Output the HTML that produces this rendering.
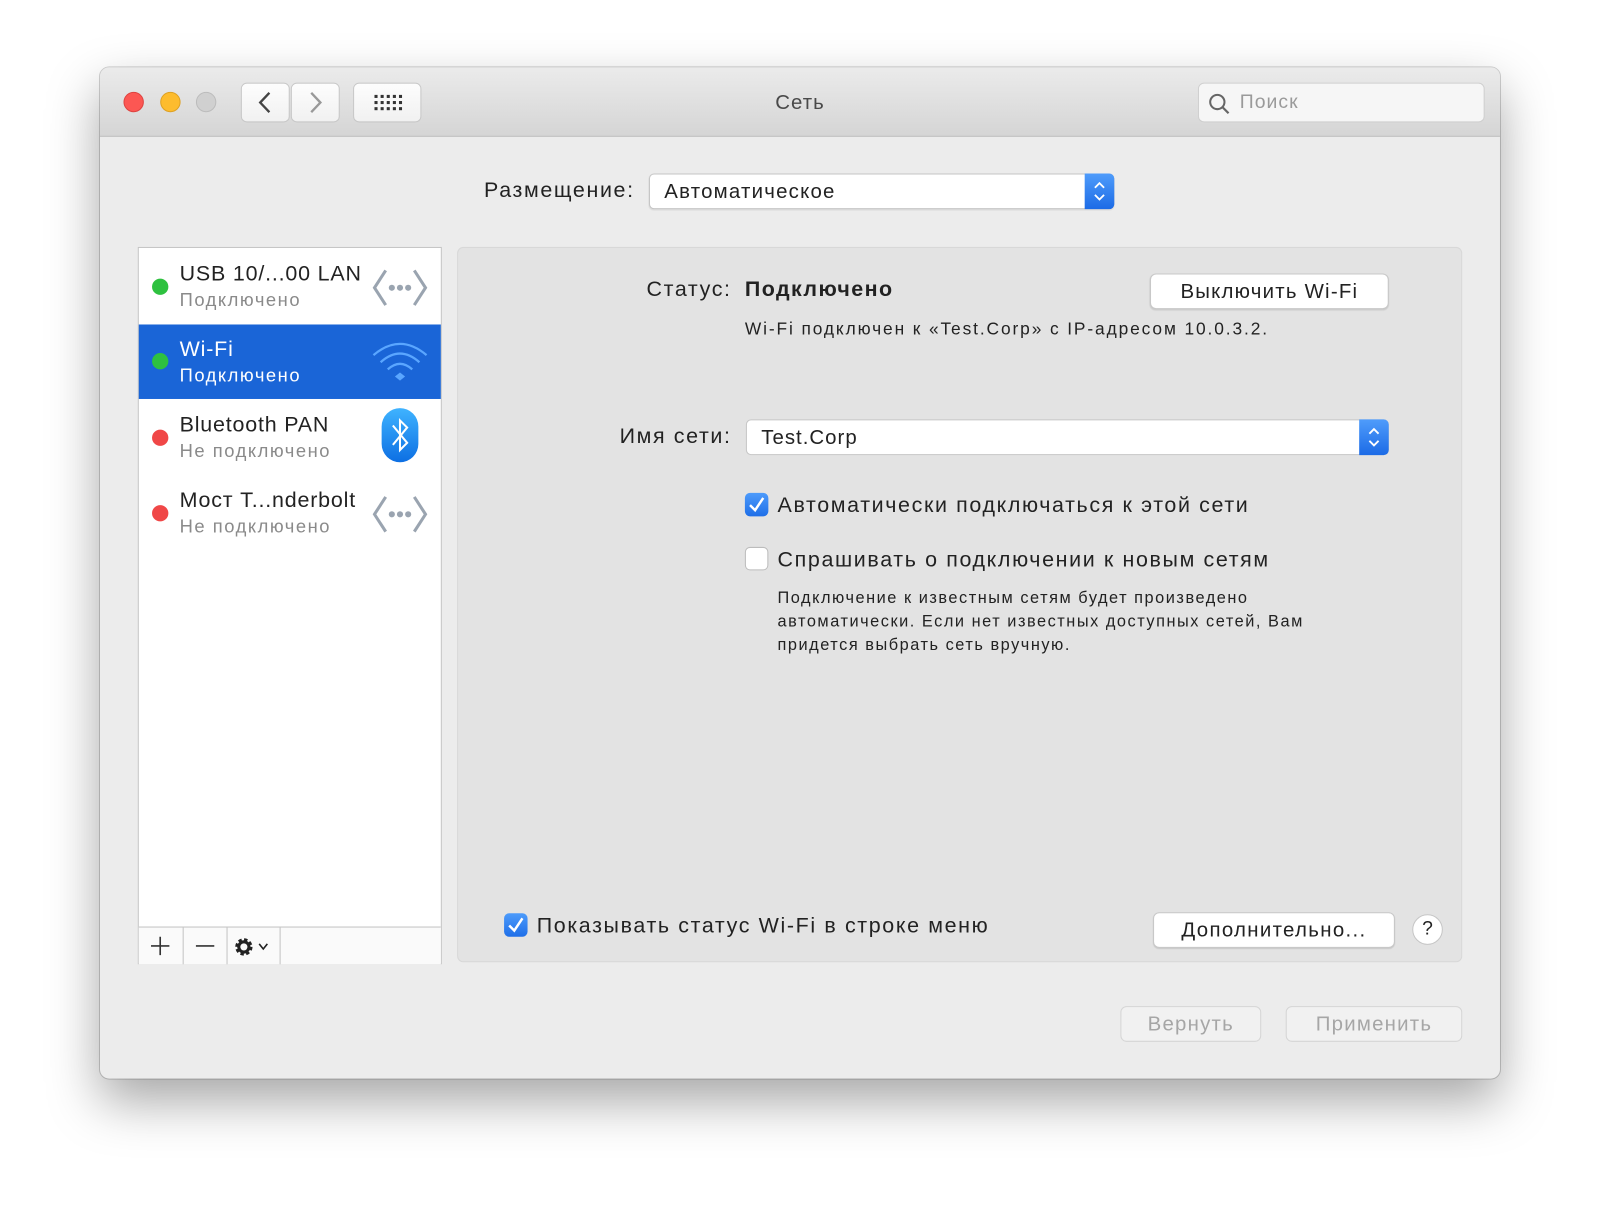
<!DOCTYPE html>
<html><head><meta charset="utf-8"><style>
html,body{margin:0;padding:0;background:#fff;width:1600px;height:1211px;overflow:hidden;font-family:"Liberation Sans","Noto Sans CJK SC",sans-serif;color:#222}
#s{position:absolute;left:0;top:0;width:1568px;height:1187px;transform:scale(1.0204);transform-origin:0 0}
.a{position:absolute}
.win{left:98px;top:66px;width:1372px;height:991px;border-radius:9px;background:#ececec;box-shadow:0 22px 50px rgba(0,0,0,.35),0 0 0 1px rgba(0,0,0,.18);overflow:hidden}
.tb{left:0;top:0;width:1372px;height:67px;background:linear-gradient(#ebebeb,#d5d5d5);border-bottom:1px solid #b9b9b9}
.dot{width:20px;height:20px;border-radius:50%;top:24px}
.btn{background:linear-gradient(#fdfdfd,#f1f1f1);border:1px solid #c8c8c8;border-radius:6px;box-sizing:border-box}
.t{white-space:nowrap;line-height:1}
.row{left:0;width:296px;height:74px}
.gd{width:16px;height:16px;border-radius:50%;left:13px;top:30px}
.cb{width:23px;height:23px;border-radius:5px;box-sizing:border-box}
.on{background:linear-gradient(#4d9bfb,#1f6fe8);}
.off{background:#fff;border:1px solid #bcbcbc}
.r1{letter-spacing:.8px}
.sub{letter-spacing:1.5px}
.l{letter-spacing:1.6px}
</style></head><body><div id="s">
<div class="a win">
 <div class="a tb">
  <div class="a dot" style="left:23px;background:#fc5753;border:1px solid #de4340;box-sizing:border-box"></div>
  <div class="a dot" style="left:59px;background:#fdbc2e;border:1px solid #dea123;box-sizing:border-box"></div>
  <div class="a dot" style="left:94px;background:#d0d0d0;border:1px solid #bcbcbc;box-sizing:border-box"></div>
  <div class="a btn" style="left:138px;top:15px;width:48px;height:39px"><svg width="46" height="37"><path d="M27 9 L18 18.5 L27 28" stroke="#444" stroke-width="2.3" fill="none"/></svg></div>
  <div class="a btn" style="left:187px;top:15px;width:48px;height:39px"><svg width="46" height="37"><path d="M19 9 L28 18.5 L19 28" stroke="#999" stroke-width="2.3" fill="none"/></svg></div>
  <div class="a btn" style="left:248px;top:15px;width:67px;height:39px"><svg width="65" height="37"><g fill="#333"><rect x="20" y="11" width="3" height="3"/><rect x="26" y="11" width="3" height="3"/><rect x="32" y="11" width="3" height="3"/><rect x="38" y="11" width="3" height="3"/><rect x="44" y="11" width="3" height="3"/><rect x="20" y="17" width="3" height="3"/><rect x="26" y="17" width="3" height="3"/><rect x="32" y="17" width="3" height="3"/><rect x="38" y="17" width="3" height="3"/><rect x="44" y="17" width="3" height="3"/><rect x="20" y="23" width="3" height="3"/><rect x="26" y="23" width="3" height="3"/><rect x="32" y="23" width="3" height="3"/><rect x="38" y="23" width="3" height="3"/><rect x="44" y="23" width="3" height="3"/></g></svg></div>
  <div class="a t" style="left:0;width:1372px;text-align:center;top:25px;font-size:20px;color:#4a4a4a;letter-spacing:1px">Сеть</div>
  <div class="a" style="left:1076px;top:15px;width:281px;height:39px;background:#f6f6f6;border:1px solid #cfcfcf;border-radius:6px;box-sizing:border-box"><svg class="a" style="left:9px;top:9px" width="22" height="22"><circle cx="9" cy="9" r="7" stroke="#666" stroke-width="2" fill="none"/><path d="M14 14 L20 20" stroke="#666" stroke-width="2.2"/></svg><div class="a t" style="left:40px;top:9px;font-size:19px;color:#9a9a9a;letter-spacing:1px">Поиск</div></div>
 </div>
 <div class="a t l" style="left:0;width:524px;text-align:right;top:110px;font-size:21px;color:#222">Размещение:</div>
 <div class="a" style="left:538px;top:104px;width:456px;height:35px;background:#fff;border:1px solid #c6c6c6;border-radius:5px;box-sizing:border-box;box-shadow:0 1px 1px rgba(0,0,0,.08)"><div class="a t" style="left:14px;top:7px;font-size:20px;letter-spacing:1.2px">Автоматическое</div><div class="a" style="right:-1px;top:-1px;width:29px;height:35px;background:linear-gradient(#4f9cfb,#1c6be6);border-radius:0 5px 5px 0"><svg width="29" height="35"><path d="M10 14 L14.5 9.5 L19 14 M10 21 L14.5 25.5 L19 21" stroke="#fff" stroke-width="1.8" fill="none"/></svg></div></div>
 <div class="a" style="left:37px;top:176px;width:296px;height:701px;background:#fff;border:1px solid #c3c3c3">
  <div class="a row" style="top:0"><div class="a gd" style="background:#2ec13f"></div><div class="a t r1" style="left:40px;top:15px;font-size:21px">USB 10/...00 LAN</div><div class="a t sub" style="left:40px;top:42px;font-size:18px;color:#8a8a8a">Подключено</div>
   <svg class="a" style="left:228px;top:20px" width="56" height="38"><path d="M14 2 L3 19 L14 36 M42 2 L53 19 L42 36" stroke="#9aa4b0" stroke-width="3" fill="none"/><circle cx="20" cy="19" r="3" fill="#9aa4b0"/><circle cx="28" cy="19" r="3" fill="#9aa4b0"/><circle cx="36" cy="19" r="3" fill="#9aa4b0"/></svg></div>
  <div class="a row" style="top:75px;height:73px;background:#1a65d7"><div class="a gd" style="background:#2ec13f;top:28px"></div><div class="a t r1" style="left:40px;top:14px;font-size:21px;color:#fff">Wi-Fi</div><div class="a t sub" style="left:40px;top:41px;font-size:18px;color:#fff">Подключено</div>
   <svg class="a" style="left:228px;top:14px" width="56" height="44"><g stroke="#5aa6ff" stroke-width="2.2" fill="none"><path d="M2 16 Q28 -6 54 16"/><path d="M9 23 Q28 6 47 23"/><path d="M16 30 Q28 19 40 30"/></g><path d="M23 37 L28 33 L33 37 L28 41Z" fill="#5aa6ff"/></svg></div>
  <div class="a row" style="top:148px"><div class="a gd" style="background:#f04747"></div><div class="a t r1" style="left:40px;top:15px;font-size:21px">Bluetooth PAN</div><div class="a t sub" style="left:40px;top:42px;font-size:18px;color:#8a8a8a">Не подключено</div>
   <div class="a" style="left:238px;top:9px;width:36px;height:53px;border-radius:18px;background:linear-gradient(#3fb3ff,#0d6fe3)"><svg width="36" height="53"><path d="M11 17 L25 34 L18 41 L18 12 L25 19 L11 36" stroke="#fff" stroke-width="2" fill="none"/></svg></div></div>
  <div class="a row" style="top:222px"><div class="a gd" style="background:#f04747"></div><div class="a t r1" style="left:40px;top:15px;font-size:21px">Мост T...nderbolt</div><div class="a t sub" style="left:40px;top:42px;font-size:18px;color:#8a8a8a">Не подключено</div>
   <svg class="a" style="left:228px;top:20px" width="56" height="38"><path d="M14 2 L3 19 L14 36 M42 2 L53 19 L42 36" stroke="#9aa4b0" stroke-width="3" fill="none"/><circle cx="20" cy="19" r="3" fill="#9aa4b0"/><circle cx="28" cy="19" r="3" fill="#9aa4b0"/><circle cx="36" cy="19" r="3" fill="#9aa4b0"/></svg></div>
  <div class="a" style="left:0;top:665px;width:296px;height:36px;border-top:1px solid #c3c3c3;background:#fafafa">
   <div class="a" style="left:0;top:0;width:43px;height:36px;border-right:1px solid #c3c3c3"><svg width="43" height="36"><path d="M21 9 V27 M12 18 H30" stroke="#333" stroke-width="1.6"/></svg></div>
   <div class="a" style="left:44px;top:0;width:42px;height:36px;border-right:1px solid #c3c3c3"><svg width="42" height="36"><path d="M12 18 H30" stroke="#333" stroke-width="1.6"/></svg></div>
   <div class="a" style="left:87px;top:0;width:51px;height:36px;border-right:1px solid #c3c3c3"><svg width="51" height="36"><circle cx="16" cy="19" r="6.5" fill="none" stroke="#222" stroke-width="4" stroke-dasharray="3 2.1"/><circle cx="16" cy="19" r="5" fill="none" stroke="#222" stroke-width="3"/><path d="M31 16 L35 21 L39 16" stroke="#222" stroke-width="1.6" fill="none"/></svg></div>
  </div>
 </div>
 <div class="a" style="left:350px;top:176px;width:985px;height:701px;background:#e3e3e3;border:1px solid #d8d8d8;border-radius:6px;box-sizing:border-box"></div>
 <div class="a t l" style="left:0;width:619px;text-align:right;top:207px;font-size:21px">Статус:</div>
 <div class="a t" style="left:632px;top:207px;font-size:21px;font-weight:bold;letter-spacing:1.4px">Подключено</div>
 <div class="a btn" style="left:1029px;top:202px;width:234px;height:35px;background:#fff;box-shadow:0 1px 1px rgba(0,0,0,.1)"><div class="t" style="text-align:center;margin-top:7px;font-size:20px;letter-spacing:1.2px">Выключить Wi-Fi</div></div>
 <div class="a t" style="left:632px;top:248px;font-size:17px;letter-spacing:1.85px">Wi-Fi подключен к «Test.Corp» с IP-адресом 10.0.3.2.</div>
 <div class="a t l" style="left:0;width:619px;text-align:right;top:351px;font-size:21px">Имя сети:</div>
 <div class="a" style="left:633px;top:345px;width:630px;height:35px;background:#fff;border:1px solid #c6c6c6;border-radius:5px;box-sizing:border-box"><div class="a t" style="left:14px;top:7px;font-size:20px;letter-spacing:1px">Test.Corp</div><div class="a" style="right:-1px;top:-1px;width:29px;height:35px;background:linear-gradient(#4f9cfb,#1c6be6);border-radius:0 5px 5px 0"><svg width="29" height="35"><path d="M10 14 L14.5 9.5 L19 14 M10 21 L14.5 25.5 L19 21" stroke="#fff" stroke-width="1.8" fill="none"/></svg></div></div>
 <div class="a cb on" style="left:632px;top:417px"><svg width="23" height="23"><path d="M5 12 L10 17 L18 5" stroke="#fff" stroke-width="2.4" fill="none"/></svg></div>
 <div class="a t l" style="left:664px;top:419px;font-size:21px">Автоматически подключаться к этой сети</div>
 <div class="a cb off" style="left:632px;top:470px"></div>
 <div class="a t l" style="left:664px;top:472px;font-size:21px">Спрашивать о подключении к новым сетям</div>
 <div class="a" style="left:664px;top:509px;font-size:16px;line-height:23px;color:#222;letter-spacing:1.5px;white-space:nowrap">Подключение к известным сетям будет произведено<br>автоматически. Если нет известных доступных сетей, Вам<br>придется выбрать сеть вручную.</div>
 <div class="a cb on" style="left:396px;top:829px"><svg width="23" height="23"><path d="M5 12 L10 17 L18 5" stroke="#fff" stroke-width="2.4" fill="none"/></svg></div>
 <div class="a t l" style="left:428px;top:831px;font-size:21px">Показывать статус Wi-Fi в строке меню</div>
 <div class="a btn" style="left:1032px;top:828px;width:237px;height:35px;background:#fff;box-shadow:0 1px 1px rgba(0,0,0,.12)"><div class="t" style="text-align:center;margin-top:7px;font-size:20px;letter-spacing:1.3px">Дополнительно...</div></div>
 <div class="a" style="left:1286px;top:830px;width:30px;height:30px;border-radius:50%;background:#fff;border:1px solid #c6c6c6;box-sizing:border-box;text-align:center;font-size:19px;line-height:28px">?</div>
 <div class="a btn" style="left:1000px;top:920px;width:138px;height:35px;background:#f1f1f1;border-color:#d5d5d5"><div class="t" style="text-align:center;margin-top:7px;font-size:20px;color:#a6a6a6;letter-spacing:1.2px">Вернуть</div></div>
 <div class="a btn" style="left:1162px;top:920px;width:173px;height:35px;background:#f1f1f1;border-color:#d5d5d5"><div class="t" style="text-align:center;margin-top:7px;font-size:20px;color:#a6a6a6;letter-spacing:1.2px">Применить</div></div>
</div>
</div></body></html>
